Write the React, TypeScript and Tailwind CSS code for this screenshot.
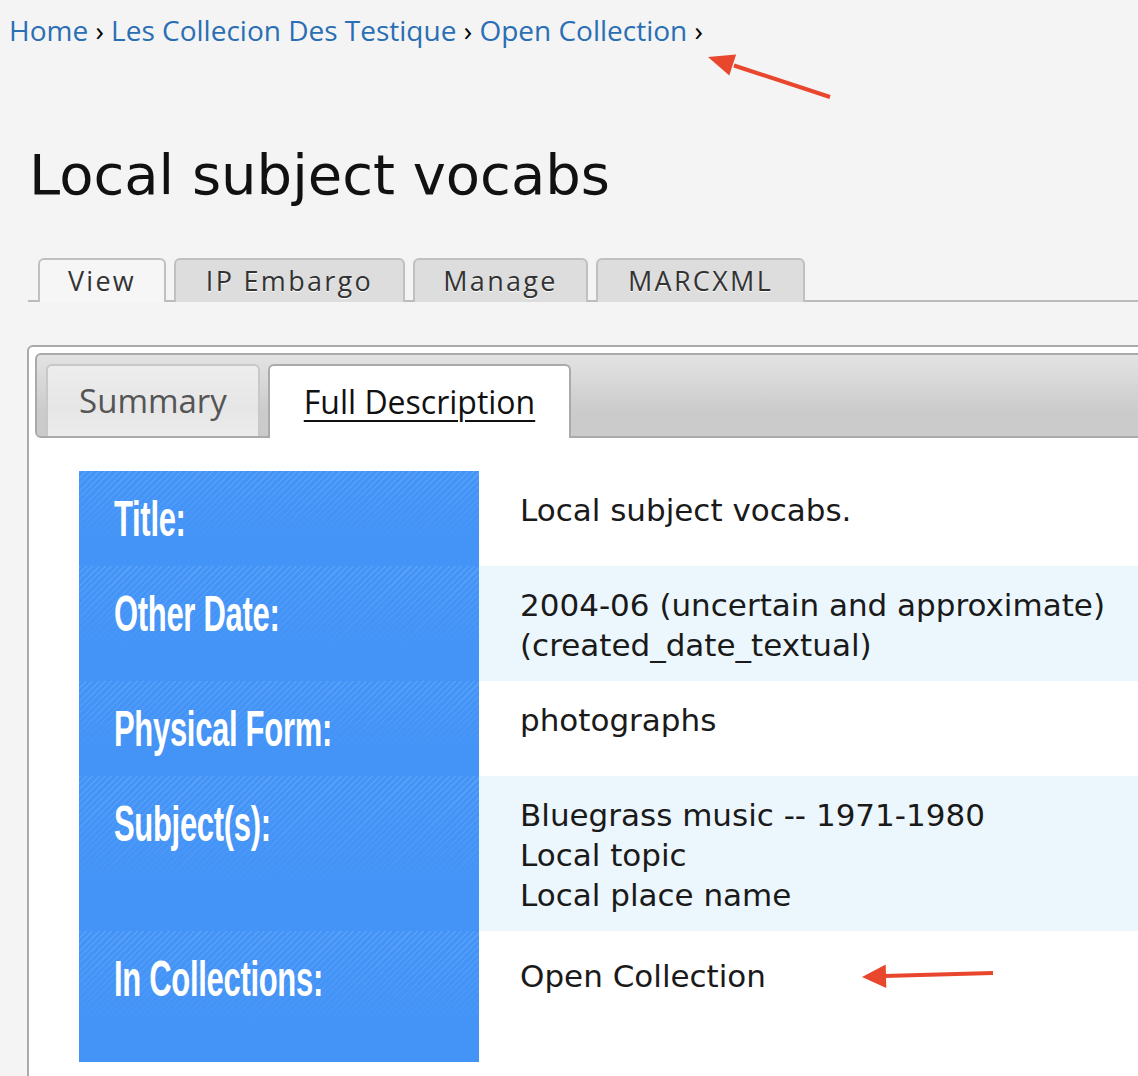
import React from "react";

const crumbs = ["Home", "Les Collecion Des Testique", "Open Collection"];

const topTabs = [
  { label: "View", w: "w-[128px]", active: true },
  { label: "IP Embargo", w: "w-[231px]", active: false },
  { label: "Manage", w: "w-[175px]", active: false },
  { label: "MARCXML", w: "w-[209px]", active: false },
];

const rows = [
  { label: "Title:", lines: ["Local subject vocabs."], alt: false },
  { label: "Other Date:", lines: ["2004-06 (uncertain and approximate)", "(created_date_textual)"], alt: true },
  { label: "Physical Form:", lines: ["photographs"], alt: false },
  { label: "Subject(s):", lines: ["Bluegrass music -- 1971-1980", "Local topic", "Local place name"], alt: true },
  { label: "In Collections:", lines: ["Open Collection"], alt: false, last: true },
];

// pointer arrows drawn over the screenshot
function Arrows() {
  return (
    <svg className="absolute inset-0 pointer-events-none" width="1138" height="1076">
      <line x1="830" y1="97" x2="734" y2="65.5" stroke="#e8472e" strokeWidth="4" />
      <polygon points="708,57 736.1,54.6 729.3,75.6" fill="#e8472e" />
      <line x1="993" y1="973" x2="884" y2="976" stroke="#e8472e" strokeWidth="4" />
      <polygon points="862,977 886.3,988 885.7,964.5" fill="#e8472e" />
    </svg>
  );
}

export default function App() {
  return (
    <div className="relative w-[1138px] h-[1076px] overflow-hidden bg-[#f4f4f4] font-['Open_Sans',sans-serif]">
      {/* breadcrumb */}
      <div className="pl-[9px] pt-[11px] text-[28px] leading-[38px] whitespace-nowrap">
        {crumbs.map((c) => (
          <span key={c}>
            <a className="text-[#2a6eb4]">{c}</a>
            <span className="text-black"> › </span>
          </span>
        ))}
      </div>

      <h1 className="mt-[94px] pl-[29px] text-[56px] leading-[64px] text-[#111] font-['DejaVu_Sans',sans-serif] font-normal">
        Local subject vocabs
      </h1>

      {/* top tabs */}
      <div className="mt-[51px] ml-[28px] pl-[10px] flex gap-[8px] border-b-2 border-[#bbb]">
        {topTabs.map((t) => (
          <div
            key={t.label}
            className={`${t.w} h-[44px] -mb-[2px] flex items-center justify-center rounded-t-md border-2 border-b-0 border-[#c0c0c0] text-[27px] tracking-[2.3px] text-[#333] [text-shadow:0_1px_0_#fff] ${
              t.active ? "bg-[#f6f6f6]" : "bg-[#dddddd]"
            }`}
          >
            {t.label}
          </div>
        ))}
      </div>

      {/* panel */}
      <div className="mt-[43px] ml-[27px] w-[1200px] h-[800px] rounded-md border-2 border-[#aaa] bg-white p-[6px]">
        <div className="h-[85px] rounded-md border-2 border-[#aaa] bg-[linear-gradient(to_bottom,#e3e3e3,#cbcbcb_70%,#cbcbcb)] pl-[9px] pt-[9px] flex gap-[8px]">
          <div className="w-[214px] h-[72px] rounded-t-md border-2 border-b-0 border-[#c8c8c8] bg-[linear-gradient(to_bottom,#ededed,#e6e6e6_60%,#ececec)] flex items-center justify-center text-[33px] text-[#555]">
            Summary
          </div>
          <div className="w-[303px] h-[74px] rounded-t-md border-2 border-b-0 border-[#aaa] bg-white flex items-center justify-center text-[32px] text-[#111] underline underline-offset-[6px] decoration-2">
            Full Description
          </div>
        </div>

        {/* description table */}
        <div className="ml-[44px] mt-[33px] flex flex-col">
          {rows.map((r) => (
            <div key={r.label} className="flex">
              <div
                className={`w-[400px] shrink-0 pl-[35px] pt-[18px] ${r.last ? "pb-[53px]" : "pb-[17px]"} bg-[#4493f6] bg-[linear-gradient(to_bottom,rgba(68,147,246,0)_0%,#4493f6_75%),repeating-linear-gradient(135deg,#58a1f8_0px,#58a1f8_1.5px,#4493f6_1.5px,#4493f6_4.5px)]`}
              >
                <span className="inline-block origin-left scale-x-[0.62] whitespace-nowrap text-[50px] leading-[60px] font-bold text-white font-['Liberation_Sans',Arial,sans-serif] tracking-[-0.5px]">
                  {r.label}
                </span>
              </div>
              <div
                className={`flex-1 pl-[41px] ${r.last ? "pt-[25px]" : "pt-[19px]"} pb-[16px] text-[31px] leading-[40px] text-[#1a1a1a] font-['DejaVu_Sans',sans-serif] ${
                  r.alt ? "bg-[#ecf7fd]" : "bg-white"
                }`}
              >
                {r.lines.map((l) => (
                  <div key={l} className="whitespace-nowrap">{l}</div>
                ))}
              </div>
            </div>
          ))}
        </div>
      </div>

      <Arrows />
    </div>
  );
}
